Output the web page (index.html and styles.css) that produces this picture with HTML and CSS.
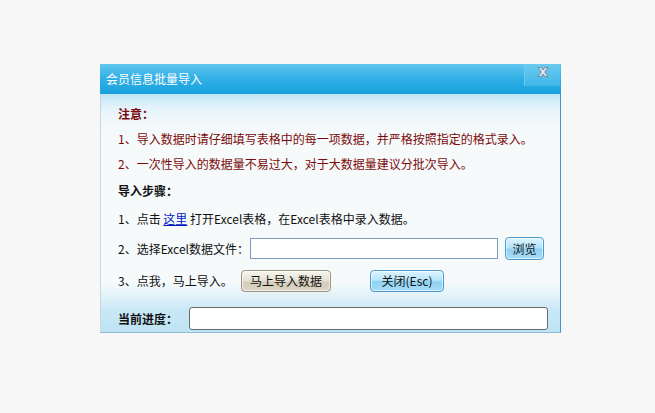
FILE: index.html
```html
<!DOCTYPE html>
<html lang="zh-CN">
<head>
<meta charset="utf-8">
<title>会员信息批量导入</title>
<link rel="stylesheet" href="styles.css">
</head>
<body>
<div class="page">
  <div class="dialog">
    <div class="titlebar">
      <span class="title">会员信息批量导入</span>
      <span class="close" title="关闭">
        <svg width="12" height="10" viewBox="0 0 12 10">
          <path d="M1 0.5 H4 L6 3 L8 0.5 H11 L7.6 5 L11 9.5 H8 L6 7 L4 9.5 H1 L4.4 5 Z" fill="#e4e8ec" stroke="#7d8c98" stroke-width="1"/>
        </svg>
      </span>
    </div>
    <div class="body">
      <div class="row r-notice"><b class="notice-head">注意：</b></div>
      <div class="row r-l1 notice">1、导入数据时请仔细填写表格中的每一项数据，并严格按照指定的格式录入。</div>
      <div class="row r-l2 notice">2、一次性导入的数据量不易过大，对于大数据量建议分批次导入。</div>
      <div class="row r-steps"><b>导入步骤：</b></div>
      <div class="row r-s1">1、点击&nbsp;<a href="#" class="link">这里</a>&nbsp;打开Excel表格，在Excel表格中录入数据。</div>
      <div class="row r-s2">
        <span class="label l2">2、选择Excel数据文件：</span>
        <span class="file-input"></span>
        <span class="btn btn-blue btn-browse">浏览</span>
      </div>
      <div class="row r-s3">
        <span class="label l3">3、点我，马上导入。</span>
        <span class="btn btn-beige btn-import">马上导入数据</span>
        <span class="btn btn-blue btn-close">关闭(Esc)</span>
      </div>
      <div class="footer">
        <b class="label lf">当前进度：</b>
        <span class="progress"></span>
      </div>
    </div>
  </div>
</div>
</body>
</html>
```
FILE: styles.css
```css
html, body {
  margin: 0;
  padding: 0;
  background: #f7f7f7;
}
body {
  font-family: "Noto Sans CJK SC", "Noto Sans", sans-serif;
  font-size: 12px;
  color: #111;
}
.page {
  padding: 64px 0 0 100px;
}
.dialog {
  width: 461px;
  box-sizing: border-box;
  border-right: 1px solid #4a94c6;
  border-bottom: 1px solid #90bcd6;
  border-left: 1px solid #c9d6de;
}
.titlebar {
  height: 30px;
  margin-left: -1px;
  margin-right: -1px;
  display: flex;
  align-items: stretch;
  background: linear-gradient(#62c5ef, #34b1e6 45%, #17a1dd);
  color: #fff;
}
.title {
  flex: 1;
  padding-left: 6px;
  line-height: 29px;
  font-size: 12px;
}
.close {
  width: 35px;
  height: 19px;
  margin-right: 1px;
  border-left: 1px solid #6ecbef;
  background: linear-gradient(#6ccaf1, #3fb6e8);
  display: flex;
  align-items: flex-start;
  justify-content: center;
  padding-top: 3px;
  box-sizing: content-box;
}
.close svg {
  display: block;
}
.body {
  height: 238px;
  padding: 7px 0 0 17px;
  box-sizing: border-box;
  background: linear-gradient(#c0e5f6 0, #e4f3fa 14px, #f3f9fb 30px, #f6fafb 50px, #f6fafb 188px, #e2f2f9 202px, #c9e8f6 216px, #bee3f4 100%);
  display: flex;
  flex-direction: column;
}
.row {
  display: flex;
  align-items: center;
  white-space: nowrap;
}
.r-notice { height: 24px; }
.r-l1 { height: 26px; }
.r-l2 { height: 24px; }
.r-steps { height: 30px; }
.r-s1 { height: 26px; }
.r-s2 { height: 35px; }
.r-s3 { height: 29px; }
.notice-head, .notice {
  color: #7c0a0a;
}
b { font-weight: 700; }
.link {
  color: #0018c0;
  text-decoration: underline;
}
.label {
  flex: none;
}
.l2 { width: 132px; }
.l3 { width: 123px; }
.file-input {
  width: 248px;
  height: 21px;
  box-sizing: border-box;
  border: 1px solid #7f9db9;
  background: #fff;
}
.btn {
  display: flex;
  align-items: center;
  justify-content: center;
  box-sizing: border-box;
  border-radius: 4px;
  color: #111;
  font-size: 12px;
  flex: none;
}
.btn-blue {
  border: 1px solid #4b9ad2;
  background: linear-gradient(#dff4ff, #b6e4fa 45%, #8fd2f4 55%, #a9ddf7);
  box-shadow: inset 0 0 0 1px rgba(255,255,255,0.55);
}
.btn-beige {
  border: 1px solid #9a9480;
  background: linear-gradient(#f7f5ee, #e4e0d2 50%, #d3cdb9 55%, #dcd7c6);
  box-shadow: inset 0 0 0 1px rgba(255,255,255,0.6);
}
.btn-browse {
  width: 39px;
  height: 23px;
  margin-left: 7px;
}
.btn-import {
  width: 90px;
  height: 22px;
}
.btn-close {
  width: 74px;
  height: 22px;
  margin-left: 39px;
}
.footer {
  margin-top: auto;
  display: flex;
  align-items: center;
  padding-bottom: 2px;
}
.lf {
  width: 71px;
  line-height: 23px;
}
.progress {
  width: 359px;
  height: 23px;
  box-sizing: border-box;
  border: 1px solid #6a6a6a;
  border-radius: 3px;
  background: #fff;
}
```
